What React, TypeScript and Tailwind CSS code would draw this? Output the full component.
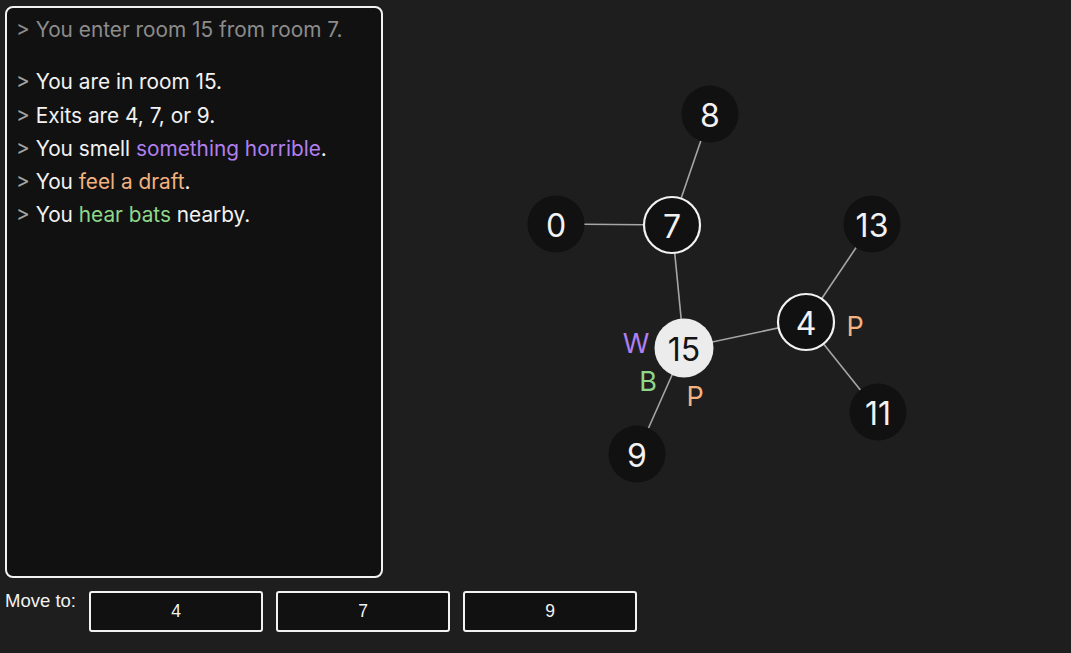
import React from "react";

type Node = { id: number; x: number; y: number; kind: "plain" | "ring" | "current" };

const nodes: Node[] = [
  { id: 8, x: 710, y: 114, kind: "plain" },
  { id: 0, x: 556, y: 224, kind: "plain" },
  { id: 7, x: 672, y: 225, kind: "ring" },
  { id: 13, x: 872, y: 224, kind: "plain" },
  { id: 4, x: 806, y: 322, kind: "ring" },
  { id: 15, x: 684, y: 348, kind: "current" },
  { id: 11, x: 878, y: 412, kind: "plain" },
  { id: 9, x: 637, y: 454, kind: "plain" },
];

const edges: [number, number][] = [
  [8, 7],
  [0, 7],
  [7, 15],
  [15, 4],
  [15, 9],
  [4, 13],
  [4, 11],
];

const pos = (id: number) => nodes.find((n) => n.id === id)!;

const OFFSET_X = 383;

function Graph() {
  return (
    <svg width={688} height={653} viewBox={`${OFFSET_X} 0 688 653`} className="block shrink-0">
      {edges.map(([a, b], i) => {
        const p = pos(a);
        const q = pos(b);
        return <line key={i} x1={p.x} y1={p.y} x2={q.x} y2={q.y} stroke="#a6a6a6" strokeWidth={1.6} />;
      })}
      {nodes.map((n) => (
        <g key={n.id}>
          <circle
            cx={n.x}
            cy={n.y}
            r={n.kind === "current" ? 29.5 : n.kind === "ring" ? 28 : 28.5}
            fill={n.kind === "current" ? "#ececec" : "#111111"}
            stroke={n.kind === "ring" ? "#f2f2f2" : "none"}
            strokeWidth={2.2}
          />
          <text
            x={n.x}
            y={n.y + 1}
            textAnchor="middle"
            dominantBaseline="central"
            fontFamily="Inter, 'Noto Sans', sans-serif"
            fontSize={32}
            fill={n.kind === "current" ? "#141414" : "#f2f2f2"}
          >
            {n.id}
          </text>
        </g>
      ))}
      <g fontFamily="Inter, 'Noto Sans', sans-serif" fontSize={27} textAnchor="middle" dominantBaseline="central">
        <text x={636} y={343} fill="#b07ff0">W</text>
        <text x={648} y={381} fill="#8fd88a">B</text>
        <text x={695} y={396} fill="#f4b27e">P</text>
        <text x={855} y={326} fill="#f4b27e">P</text>
      </g>
    </svg>
  );
}

function Line({ children, dim }: { children: React.ReactNode; dim?: boolean }) {
  return (
    <div className={dim ? "text-[#8c8c8c]" : "text-[#f2f2f2]"}>
      <span className={dim ? "text-[#8c8c8c]" : "text-[#a3a3a3]"}>&gt;</span> {children}
    </div>
  );
}

export default function App() {
  return (
    <div className="w-[1071px] h-[653px] bg-[#1e1e1e] flex overflow-hidden">
      <div className="flex flex-col pl-[5px] pt-[6px] w-[383px] shrink-0">
        <div className="h-[572px] w-[378px] rounded-[8px] border-2 border-[#f2f2f2] bg-[#111111] pl-[9px] pt-[5px] text-[20.8px] leading-[33.3px] font-['Inter','Noto_Sans',sans-serif]">
          <Line dim>You enter room 15 from room 7.</Line>
          <div className="h-[19px]" />
          <Line>You are in room 15.</Line>
          <Line>Exits are 4, 7, or 9.</Line>
          <Line>
            You smell <span className="text-[#b07ff0]">something horrible</span>.
          </Line>
          <Line>
            You <span className="text-[#f4b27e]">feel a draft</span>.
          </Line>
          <Line>
            You <span className="text-[#8fd88a]">hear bats</span> nearby.
          </Line>
        </div>
        <div className="flex items-start mt-[13px] font-['Liberation_Sans',Arial,sans-serif] text-[#f2f2f2]">
          <div className="w-[84px] shrink-0 whitespace-nowrap text-[18.5px] leading-[20px]">Move to:</div>
          <div className="flex gap-[13px] shrink-0">
            {[4, 7, 9].map((n) => (
              <button
                key={n}
                className="w-[174px] h-[41px] shrink-0 rounded-[3px] border-2 border-[#f2f2f2] bg-[#111111] text-[17.5px] text-[#f2f2f2] flex items-center justify-center"
              >
                {n}
              </button>
            ))}
          </div>
        </div>
      </div>
      <Graph />
    </div>
  );
}
